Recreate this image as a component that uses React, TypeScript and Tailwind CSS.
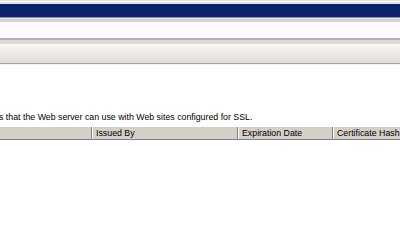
export default function App() {
  const font = { fontFamily: '"Liberation Sans", Arial, sans-serif' };
  return (
    <div className="w-[400px] h-[250px] overflow-hidden bg-white flex flex-col" style={font}>
      <div className="h-[1px] bg-[#e4e2de]" />
      <div className="h-[1px] bg-[#faf9f7]" />
      <div className="h-[2px] bg-[#e4e2de]" />
      <div className="h-[13px] bg-[#0a246a]" />
      <div className="h-[1px] bg-[#8a94b4]" />
      <div className="h-[1px] bg-[#e8e6e2]" />
      <div className="h-[3px] bg-[#d6d3ce]" />
      <div className="h-[16px] bg-[#fffbff]" />
      <div className="h-[2px] bg-[#b4b1ae]" />
      <div className="h-[4px] bg-[#dcd9d6]" />
      <div className="h-[19px] bg-gradient-to-b from-[#faf7f5] to-[#e0dcd9]" />
      <div className="h-[1px] bg-[#a7a5a3]" />
      <div className="h-[1px] bg-[#f2f1f0]" />
      <div className="h-[45px] bg-white" />
      <div className="h-[15px] flex items-center text-[8.8px] text-black whitespace-nowrap -ml-[1px]">
        s that the Web server can use with Web sites configured for SSL.
      </div>
      <div className="h-[2px]" />
      <div className="h-[12px] bg-[#d4d0c8] flex text-[8.8px] text-black whitespace-nowrap">
        <div className="w-[91px] shrink-0" />
        <div className="w-[1px] shrink-0 bg-[#808080]" />
        <div className="w-[1px] shrink-0 bg-white" />
        <div className="w-[144px] shrink-0 pl-[3px] leading-[12px]">Issued By</div>
        <div className="w-[1px] shrink-0 bg-[#808080]" />
        <div className="w-[1px] shrink-0 bg-white" />
        <div className="w-[93px] shrink-0 pl-[3px] leading-[12px]">Expiration Date</div>
        <div className="w-[1px] shrink-0 bg-[#808080]" />
        <div className="w-[1px] shrink-0 bg-white" />
        <div className="flex-1 pl-[3px] leading-[12px]">Certificate Hash</div>
      </div>
      <div className="h-[1px] bg-[#808080]" />
      <div className="flex-1 bg-white" />
    </div>
  );
}
